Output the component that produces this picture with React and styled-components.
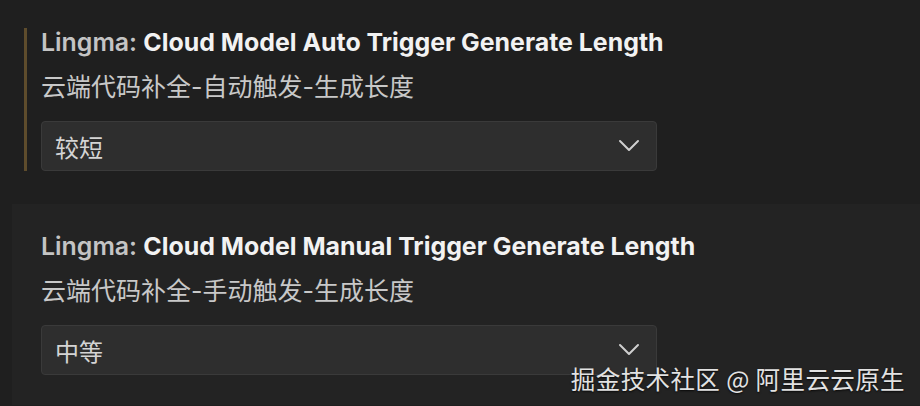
import styled, { createGlobalStyle } from "styled-components";

const Global = createGlobalStyle`
  html, body {
    margin: 0;
    background: #1f1f1f;
  }
  body {
    font-family: Inter, "Noto Sans CJK SC", "Noto Sans", sans-serif;
    color: #cccccc;
  }
`;

const Page = styled.div`
  position: relative;
  width: 920px;
  height: 406px;
  overflow: hidden;
  background: #1f1f1f;
  padding-top: 28px;
  box-sizing: border-box;
`;

const Item = styled.section`
  margin-left: ${({ $hovered }) => ($hovered ? "12px" : "0")};
  margin-top: ${({ $hovered }) => ($hovered ? "33px" : "0")};
  padding: ${({ $hovered }) => ($hovered ? "28px 0 30px 12px" : "0 0 0 24px")};
  background: ${({ $hovered }) => ($hovered ? "#232323" : "transparent")};
`;

const Body = styled.div`
  border-left: 3px solid ${({ $focused }) => ($focused ? "#5e4c2c" : "transparent")};
  padding-left: 14px;
`;

const Title = styled.div`
  font-size: 24.9px;
  line-height: 28px;
  font-weight: 700;
  color: #f2f2f2;
  white-space: nowrap;

  span {
    color: #c4c4c4;
    font-weight: 600;
  }
`;

const Desc = styled.div`
  margin-top: 17px;
  font-size: 25px;
  line-height: 28px;
  color: #c8c8c8;
`;

const Select = styled.div`
  margin-top: 20px;
  width: 616px;
  height: 50px;
  box-sizing: border-box;
  display: flex;
  align-items: center;
  justify-content: space-between;
  padding: 0 16px 0 13px;
  background: #2e2e2e;
  border: 1px solid #3a3a3a;
  border-radius: 4px;
  font-size: 24px;
  color: #d4d4d4;
`;

const Watermark = styled.div`
  position: absolute;
  right: 15px;
  bottom: 10px;
  font-size: 24.5px;
  letter-spacing: 0.4px;
  color: #e2e2e2;
  text-shadow: 0 1px 2px rgba(0, 0, 0, 0.8);
  font-family: "Noto Sans CJK SC", sans-serif;
`;

const Chevron = () => (
  <svg width="22" height="14" viewBox="0 0 22 14">
    <polyline
      points="2,2 11,11 20,2"
      fill="none"
      stroke="#cfcfcf"
      strokeWidth="2"
      strokeLinecap="round"
      strokeLinejoin="round"
    />
  </svg>
);

const settings = [
  {
    name: "Cloud Model Auto Trigger Generate Length",
    desc: "云端代码补全-自动触发-生成长度",
    value: "较短",
    focused: true,
  },
  {
    name: "Cloud Model Manual Trigger Generate Length",
    desc: "云端代码补全-手动触发-生成长度",
    value: "中等",
    hovered: true,
  },
];

export default function App() {
  return (
    <Page>
      <Global />
      {settings.map((s) => (
        <Item key={s.name} $hovered={s.hovered}>
          <Body $focused={s.focused}>
            <Title>
              <span>Lingma: </span>
              {s.name}
            </Title>
            <Desc>{s.desc}</Desc>
            <Select>
              {s.value}
              <Chevron />
            </Select>
          </Body>
        </Item>
      ))}
      <Watermark>掘金技术社区 @ 阿里云云原生</Watermark>
    </Page>
  );
}
